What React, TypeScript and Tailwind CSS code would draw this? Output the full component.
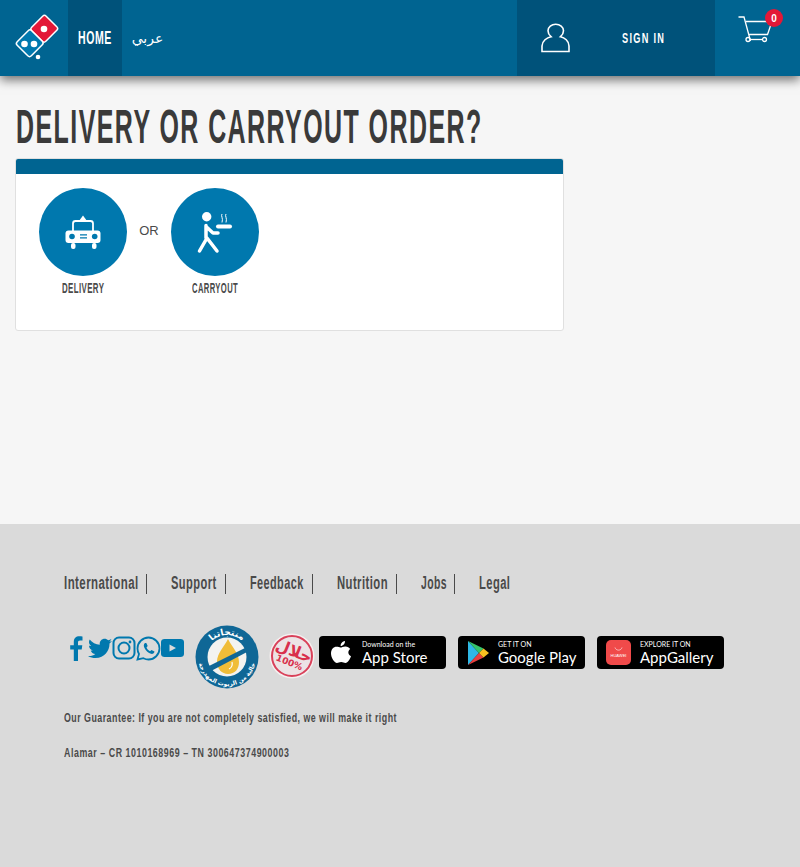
import React from "react";

function Squeeze({ box, inner, children }: { box: string; inner: string; children: React.ReactNode }) {
  return (
    <span className={`inline-block ${box}`}>
      <span className={`inline-block origin-left whitespace-nowrap ${inner}`}>{children}</span>
    </span>
  );
}

function Logo() {
  return (
    <svg width="46" height="48" viewBox="0 0 46 48" className="block">
      <g transform="translate(23 22) rotate(45)">
        <rect x="-10" y="-20.500" width="20" height="20.500" rx="2.500" fill="#e31837" stroke="#fff" strokeWidth="1.500" />
        <rect x="-10" y="0" width="20" height="20.500" rx="2.500" fill="#0078ae" stroke="#fff" strokeWidth="1.500" />
      </g>
      <circle cx="30" cy="15" r="3.300" fill="#fff" />
      <circle cx="10.500" cy="30" r="3.300" fill="#fff" />
      <circle cx="20" cy="30" r="3.300" fill="#fff" />
      <circle cx="24" cy="43" r="2.300" fill="#fff" />
    </svg>
  );
}

function UserIcon() {
  return (
    <svg width="30" height="30" viewBox="0 0 30 30" fill="none" stroke="#fff" strokeWidth="1.600" className="block">
      <path d="M1 28.500 H28 V23 C28 18 23.500 14.500 19.500 13.700 C21.500 12 22.500 10 22.500 7.800 C22.500 4 19 1.200 14.700 1.200 C10.500 1.200 7 4 7 7.800 C7 10 8 12 10 13.700 C6 14.500 1 18 1 23 Z" />
    </svg>
  );
}

function Cart() {
  return (
    <svg width="36" height="28" viewBox="0 0 36 28" fill="none" stroke="#fff" strokeWidth="1.300" className="block">
      <path d="M0.500 1 H6 L12.500 25 M8 5.500 H34 L29.500 18.500 H11.300" />
      <circle cx="10" cy="23.500" r="2" />
      <circle cx="26.500" cy="23.500" r="2" />
      <path d="M12 23.500 H24.500" />
    </svg>
  );
}

function CarIcon() {
  return (
    <svg width="36" height="36" viewBox="0 0 36 36" className="block">
      <path d="M14 7 L18 1.500 L22 7 Z" fill="#fff" />
      <path d="M8 17 V9.500 C8 8 9 7 10.500 7 H25.500 C27 7 28 8 28 9.500 V17" fill="none" stroke="#fff" strokeWidth="1.800" />
      <rect x="0.500" y="16.500" width="35" height="12.500" rx="3" fill="#fff" />
      <circle cx="7" cy="22.500" r="2.800" fill="#0078ae" />
      <circle cx="29.700" cy="22.500" r="2.800" fill="#0078ae" />
      <path d="M15 20.800 H22 M15 23.800 H22" stroke="#0078ae" strokeWidth="1.200" />
      <rect x="6" y="29" width="4.500" height="6" rx="2" fill="#fff" />
      <rect x="27" y="29" width="4.500" height="6" rx="2" fill="#fff" />
    </svg>
  );
}

function WalkIcon() {
  return (
    <svg width="38" height="44" viewBox="0 0 38 44" className="block">
      <circle cx="10.700" cy="6.700" r="4.700" fill="#fff" />
      <path d="M10 15.500 V28 M10.500 17 L17 23 H22 M11 28 L3.500 41 M11 28 L21 41" fill="none" stroke="#fff" strokeWidth="3.500" strokeLinecap="round" strokeLinejoin="round" />
      <rect x="20" y="14.500" width="16" height="4" rx="2" fill="#fff" />
      <path d="M26 4 C24.500 6 27.500 8 26 12.500 M30 4 C28.500 6 31.500 8 30 12.500" fill="none" stroke="#fff" strokeWidth="1" />
    </svg>
  );
}

function OilBadge() {
  return (
    <svg width="64" height="64" viewBox="0 0 64 64" className="block">
      <circle cx="32" cy="32" r="31.500" fill="#0f6796" />
      <circle cx="32" cy="32" r="19.500" fill="#f3f3f0" />
      <path d="M33 14 C29 22 22 28 22 37 C22 44 27 49 33 49 C40 49 44 44 44 37 C44 28 37 22 33 14 Z" fill="#f0bd38" />
      <path d="M14 41 L50 23 L52 27 L17 45.500 Z" fill="#0f6796" />
      <path d="M37 37 C38 41 36 43 34 44" fill="none" stroke="#fff" strokeWidth="1.200" />
      <path id="oilTop" d="M10 32 A22 22 0 0 1 54 32" fill="none" />
      <text fill="#fff" fontSize="9" fontFamily="'DejaVu Sans',sans-serif" fontWeight="700">
        <textPath href="#oilTop" startOffset="50%" textAnchor="middle">منتجاتنا</textPath>
      </text>
      <path id="oilBot" d="M3 32 A29 29 0 0 0 61 32" fill="none" />
      <text fill="#fff" fontSize="6" fontFamily="'DejaVu Sans',sans-serif" fontWeight="700">
        <textPath href="#oilBot" startOffset="50%" textAnchor="middle">خالية من الزيوت المهدرجة</textPath>
      </text>
    </svg>
  );
}

function HalalBadge() {
  return (
    <svg width="46" height="46" viewBox="0 0 46 46" className="block">
      <circle cx="23" cy="23" r="22.500" fill="#f5f0f0" />
      <circle cx="23" cy="23" r="20" fill="#ece3e5" stroke="#d9415a" strokeWidth="2" />
      <g transform="rotate(22 23 23)" fill="#d9304c" textAnchor="middle" fontWeight="700" fontFamily="'DejaVu Sans',sans-serif">
        <text x="23" y="23" fontSize="16">حلال</text>
        <text x="23" y="33" fontSize="9">100%</text>
      </g>
    </svg>
  );
}

function Apple() {
  return (
    <svg width="22" height="26" viewBox="0 0 22 26" className="block">
      <path fill="#fff" d="M15 1 C15.200 3.500 13 6 10.700 6 C10.300 3.700 12.600 1.200 15 1 Z M10.500 7.500 C11.700 7.500 13.200 6.300 15.500 6.400 C17.500 6.500 19.200 7.400 20.200 9 C17.500 10.700 17.800 14.800 21 16.200 C20.200 18.700 17.800 23 15.500 23 C13.900 23 13.200 22 11.200 22 C9.200 22 8.400 23 7 23 C4.300 23 1 17.500 1 13.500 C1 9.500 3.500 6.800 6.500 6.800 C8.200 6.800 9.500 7.500 10.500 7.500 Z" />
    </svg>
  );
}

function PlayLogo() {
  return (
    <svg width="22" height="26" viewBox="0 0 22 26" className="block">
      <path d="M1 1 V25 L12 13 Z" fill="#2fb8e6" />
      <path d="M1 1 L12 13 L16.500 8.500 Z" fill="#35c46b" />
      <path d="M1 25 L12 13 L16.500 17.500 Z" fill="#e8403f" />
      <path d="M16.500 8.500 L12 13 L16.500 17.500 L22 13 Z" fill="#f8c020" />
    </svg>
  );
}

function HuaweiIcon() {
  return (
    <div className="flex h-[25px] w-[25px] flex-col items-center justify-center rounded-[5px] bg-[#f04a4a] text-[4px] leading-[5px] text-white">
      <svg width="9" height="5" viewBox="0 0 9 5" className="mb-[1px] block" fill="none" stroke="#fff" strokeWidth="0.600">
        <path d="M1 0.500 C2 4 7 4 8 0.500" />
      </svg>
      <span>HUAWEI</span>
    </div>
  );
}

function Badge({ icon, iconBox, top, bottom }: { icon: React.ReactNode; iconBox: string; top: string; bottom: string }) {
  return (
    <div className="flex h-[33px] w-[127px] items-center rounded-[4px] bg-black text-white">
      <div className={`flex shrink-0 justify-center ${iconBox}`}>{icon}</div>
      <div className="flex flex-col font-['Lato',sans-serif]">
        <span className="text-[7px] leading-[9px]">{top}</span>
        <span className="text-[15px] leading-[16px] whitespace-nowrap">{bottom}</span>
      </div>
    </div>
  );
}

export default function App() {
  return (
    <div className="flex min-h-[867px] flex-col bg-[#f6f6f6] font-['Liberation_Sans',sans-serif]">
      <header className="relative z-10 flex h-[76px] bg-[#006491] shadow-[0_4px_10px_rgba(0,0,0,0.55)]">
        <div className="flex w-[68px] items-center justify-center pl-[6px]">
          <Logo />
        </div>
        <div className="flex w-[54px] items-center justify-center bg-[#00527a] text-[18px] font-bold tracking-[1px] text-white">
          <Squeeze box="w-[34px]" inner="scale-x-[.586]">HOME</Squeeze>
        </div>
        <div className="flex w-[50px] items-center justify-center pl-[1px] text-[14px] text-white font-['DejaVu_Sans',sans-serif]">عربي</div>
        <div className="flex-1" />
        <div className="flex w-[198px] items-center bg-[#00527a] pl-[24px] text-white">
          <UserIcon />
          <span className="ml-[51px] text-[14px] font-bold tracking-[2px]">
            <Squeeze box="w-[43px]" inner="scale-x-[.655]">SIGN IN</Squeeze>
          </span>
        </div>
        <div className="relative w-[85px]">
          <div className="ml-[23px] mt-[16px]"><Cart /></div>
          <div className="absolute left-[50px] top-[9px] flex h-[18px] w-[18px] items-center justify-center rounded-full bg-[#e31837] text-[10px] font-bold text-white">0</div>
        </div>
      </header>

      <main className="h-[448px] pl-[15px]">
        <h1 className="mt-[27px] pl-[1px] text-[36px] leading-[48px] font-bold tracking-[2.1px] text-[#3a3a3a]">
          <Squeeze box="w-[466px]" inner="scale-x-[.693] scale-y-[1.333]">DELIVERY OR CARRYOUT ORDER?</Squeeze>
        </h1>
        <section className="mt-[7px] h-[173px] w-[549px] overflow-hidden rounded-[3px] border border-[#e0e0e0] bg-white">
          <div className="h-[15px] bg-[#006491]" />
          <div className="flex items-start pl-[23px] pt-[14px]">
            <div className="flex w-[88px] flex-col items-center">
              <div className="flex h-[88px] w-[88px] items-center justify-center rounded-full bg-[#0078ae]"><CarIcon /></div>
              <span className="mt-[4px] text-[14px] leading-[16px] font-bold tracking-[0.7px] text-[#4a4a4a]">
                <Squeeze box="w-[42px]" inner="scale-x-[.563]">DELIVERY</Squeeze>
              </span>
            </div>
            <span className="mt-[33px] w-[44px] text-center text-[13px] text-[#4a4a4a]">OR</span>
            <div className="flex w-[88px] flex-col items-center">
              <div className="flex h-[88px] w-[88px] items-center justify-center rounded-full bg-[#0078ae]"><WalkIcon /></div>
              <span className="mt-[4px] text-[14px] leading-[16px] font-bold tracking-[0.7px] text-[#4a4a4a]">
                <Squeeze box="w-[46px]" inner="scale-x-[.546]">CARRYOUT</Squeeze>
              </span>
            </div>
          </div>
        </section>
      </main>

      <footer className="flex-1 bg-[#dadada] pl-[64px] pt-[50px] text-[#4a4a4a]">
        <nav className="flex text-[18px] font-bold leading-[19px] tracking-[0.7px]">
          <span className="mr-[24px] border-r border-[#4a4a4a] pb-[1px] pr-[7px]"><Squeeze box="w-[75px]" inner="scale-x-[.637]">International</Squeeze></span>
          <span className="mr-[24px] border-r border-[#4a4a4a] pb-[1px] pr-[8px]"><Squeeze box="w-[46px]" inner="scale-x-[.617]">Support</Squeeze></span>
          <span className="mr-[24px] border-r border-[#4a4a4a] pb-[1px] pr-[8px]"><Squeeze box="w-[54px]" inner="scale-x-[.605]">Feedback</Squeeze></span>
          <span className="mr-[24px] border-r border-[#4a4a4a] pb-[1px] pr-[8px]"><Squeeze box="w-[51px]" inner="scale-x-[.627]">Nutrition</Squeeze></span>
          <span className="mr-[24px] border-r border-[#4a4a4a] pb-[1px] pr-[7px]"><Squeeze box="w-[26px]" inner="scale-x-[.58]">Jobs</Squeeze></span>
          <span><Squeeze box="w-[31px]" inner="scale-x-[.62]">Legal</Squeeze></span>
        </nav>
        <div className="mt-[31px] flex items-start">
          <svg width="122" height="28" viewBox="0 0 122 28" className="mt-[10px] block" fill="#0078ae">
            <path d="M10 26 V14.500 H13.700 L14.300 10.200 H10 V7.500 C10 6.200 10.400 5.400 12.200 5.400 H14.500 V1.500 C14 1.400 12.700 1.300 11.300 1.300 C8 1.300 5.800 3.300 5.800 7 V10.200 H2.200 V14.500 H5.800 V26 Z" transform="translate(4 0)" />
            <path transform="translate(24 2)" d="M24 4 C23.100 4.400 22.200 4.700 21.200 4.800 C22.200 4.200 23 3.200 23.400 2 C22.400 2.600 21.400 3 20.200 3.300 C19.300 2.300 18 1.700 16.600 1.700 C13.900 1.700 11.700 3.900 11.700 6.600 C11.700 7 11.700 7.300 11.800 7.700 C7.700 7.500 4.100 5.500 1.700 2.500 C1.300 3.200 1 4.100 1 5 C1 6.700 1.900 8.200 3.200 9.100 C2.400 9.100 1.600 8.900 1 8.500 V8.600 C1 11 2.700 13 4.900 13.400 C4.500 13.500 4.100 13.600 3.600 13.600 C3.300 13.600 3 13.600 2.700 13.500 C3.300 15.500 5.100 16.900 7.300 16.900 C5.600 18.200 3.500 19 1.200 19 C0.800 19 0.400 19 0 18.900 C2.200 20.300 4.800 21.100 7.500 21.100 C16.600 21.100 21.500 13.600 21.500 7.100 V6.500 C22.500 5.800 23.300 5 24 4 Z" />
            <g fill="none" stroke="#0078ae" strokeWidth="2">
              <rect x="49.500" y="2.500" width="21" height="21" rx="5.500" />
              <circle cx="60" cy="13" r="5.500" />
            </g>
            <circle cx="66" cy="7" r="1.400" />
            <path d="M73.500 24.500 L75 19 C74 17.300 73.500 15.500 73.500 13.500 C73.500 7.500 78.500 2.500 84.500 2.500 C90.500 2.500 95.500 7.500 95.500 13.500 C95.500 19.500 90.500 24.500 84.500 24.500 C82.700 24.500 81 24 79.400 23.200 Z" fill="none" stroke="#0078ae" strokeWidth="1.800" />
            <path d="M81 8 C79.500 9 79.500 11 80.500 13 C81.800 15.800 84.500 18.300 87 18.800 C89 19.200 90.300 18 90.500 16.500 L87.500 15 L86 16.300 C84.500 15.500 83.200 14.200 82.500 12.500 L83.700 11 L82.300 8 Z" />
            <path fillRule="evenodd" transform="translate(-2 0)" d="M99 7 C99 5 100.500 4 102.500 4 H118.500 C120.500 4 122 5 122 7 V19 C122 21 120.500 22 118.500 22 H102.500 C100.500 22 99 21 99 19 Z M107.500 9.500 V16.500 L114 13 Z" />
          </svg>
          <div className="ml-[9px]"><OilBadge /></div>
          <div className="ml-[10px] mt-[8px]"><HalalBadge /></div>
          <div className="ml-[4px] mt-[11px] flex gap-[12px]">
            <Badge icon={<Apple />} iconBox="w-[43px]" top="Download on the" bottom="App Store" />
            <Badge icon={<PlayLogo />} iconBox="w-[40px]" top="GET IT ON" bottom="Google Play" />
            <Badge icon={<HuaweiIcon />} iconBox="w-[43px]" top="EXPLORE IT ON" bottom="AppGallery" />
          </div>
        </div>
        <p className="mt-[21px] text-[13px] font-bold leading-[16px] tracking-[0.7px]">
          <Squeeze box="w-[332px]" inner="scale-x-[.68]">Our Guarantee: If you are not completely satisfied, we will make it right</Squeeze>
        </p>
        <p className="mt-[19px] text-[13px] font-bold leading-[16px] tracking-[0.8px]">
          <Squeeze box="w-[225px]" inner="scale-x-[.68]">Alamar – CR 1010168969 – TN 300647374900003</Squeeze>
        </p>
      </footer>
    </div>
  );
}
